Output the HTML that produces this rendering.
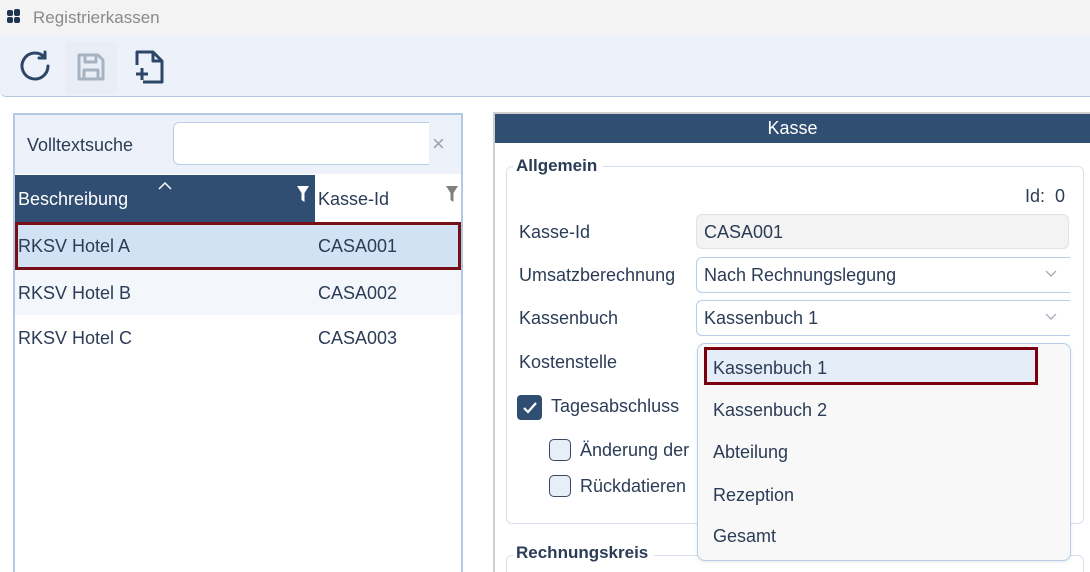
<!DOCTYPE html><html><head><meta charset="utf-8"><style>
*{box-sizing:border-box;margin:0;padding:0}
html,body{width:1090px;height:572px;overflow:hidden}
body{background:#fff;font-family:"Liberation Sans",sans-serif;color:#2b3c56;position:relative}
.a{position:absolute}
.t{font-size:18px;white-space:nowrap}
</style></head><body>
<div class="a" style="left:0;top:0;width:1090px;height:36px;background:#f3f3f3"></div>
<div class="a" style="left:7px;top:10px;width:6px;height:6px;background:#1e3350;border-radius:2px"></div>
<div class="a" style="left:14px;top:9px;width:6px;height:7px;background:#1e3350;border-radius:2px"></div>
<div class="a" style="left:7px;top:17px;width:6px;height:6px;background:#1e3350;border-radius:2px"></div>
<div class="a" style="left:14px;top:17px;width:6px;height:6px;background:#1e3350;border-radius:2px"></div>
<div class="a t" style="left:33px;top:8px;font-size:17px;color:#8a8a8a">Registrierkassen</div>
<div class="a" style="left:0;top:36px;width:1090px;height:61px;background:#edf2fa;border-bottom:1px solid #b6c8e0;border-radius:0 0 0 6px"></div>
<div class="a" style="left:65px;top:41px;width:52px;height:54px;background:#e9eef6;border-radius:4px"></div>
<svg class="a" style="left:18px;top:49px" width="34" height="34" viewBox="0 0 34 34" fill="none" stroke="#2d4566" stroke-width="3" stroke-linecap="round"><path d="M30 17a13 13 0 1 1-4-9.4"/><path d="M27 3v6h-6"/></svg>
<svg class="a" style="left:75px;top:51px" width="32" height="32" viewBox="0 0 32 32" fill="none" stroke="#a7b2c2" stroke-width="3" stroke-linejoin="round"><path d="M4 4h19l5 5v19H4z"/><path d="M10 4v7h11V4"/><path d="M9 28v-9h14v9"/></svg>
<svg class="a" style="left:133px;top:49px" width="32" height="36" viewBox="0 0 32 36" fill="none" stroke="#2d4566" stroke-width="3" stroke-linejoin="round"><path d="M4 16V3h16l9 9v21H10"/><path d="M20 3v9h9"/><path d="M9 19v12M3 25h12"/></svg>

<div class="a" style="left:13px;top:113px;width:450px;height:459px;border:2px solid #b2c9e6;border-bottom:none"></div>
<div class="a" style="left:15px;top:115px;width:446px;height:59px;background:#edf2fa"></div>
<div class="a t" style="left:27px;top:135px">Volltextsuche</div>
<div class="a" style="left:173px;top:122px;width:256px;height:43px;background:#fff;border:1px solid #b8cde8;border-right:none;border-radius:6px 0 0 6px"></div>
<div class="a" style="left:432px;top:131px;font-size:22px;color:#9aa3ae">×</div>
<div class="a" style="left:15px;top:175px;width:300px;height:47px;background:#304e72"></div>
<div class="a t" style="left:18px;top:189px;color:#fff">Beschreibung</div>
<svg class="a" style="left:158px;top:181px" width="14" height="9"><path d="M1 8l6-6 6 6" fill="none" stroke="#fff" stroke-width="1.5"/></svg>
<svg class="a" style="left:297px;top:186px" width="12" height="16" viewBox="0 0 12 16"><path d="M0 0h12L7.5 7v9L4.5 14V7z" fill="#fff"/></svg>
<div class="a t" style="left:318px;top:189px">Kasse-Id</div>
<svg class="a" style="left:446px;top:186px" width="12" height="16" viewBox="0 0 12 16"><path d="M0 0h12L7.5 7v9L4.5 14V7z" fill="#7f7f7f"/></svg>
<div class="a" style="left:15px;top:222px;width:446px;height:48px;background:#d2e1f3;border:3px solid #780f18"></div>
<div class="a t" style="left:18px;top:236px">RKSV Hotel A</div><div class="a t" style="left:318px;top:236px">CASA001</div>
<div class="a" style="left:15px;top:270px;width:446px;height:45px;background:#f3f6fa"></div>
<div class="a t" style="left:18px;top:283px">RKSV Hotel B</div><div class="a t" style="left:318px;top:283px">CASA002</div>
<div class="a t" style="left:18px;top:328px">RKSV Hotel C</div><div class="a t" style="left:318px;top:328px">CASA003</div>

<div class="a" style="left:493px;top:112px;width:597px;height:460px;border-left:2px solid #cfcfcf;border-top:2px solid #cfcfcf"></div>
<div class="a" style="left:495px;top:114px;width:595px;height:29px;background:#304e72;color:#fff;font-size:18px;text-align:center;line-height:29px">Kasse</div>
<div class="a" style="left:506px;top:166px;width:578px;height:358px;border:1px solid #d6e0ec;border-radius:6px"></div>
<div class="a t" style="left:513px;top:156px;background:#fff;padding:0 6px 0 3px;font-weight:bold;font-size:17px">Allgemein</div>
<div class="a t" style="left:1025px;top:186px">Id:&nbsp; 0</div>
<div class="a t" style="left:519px;top:222px">Kasse-Id</div>
<div class="a" style="left:696px;top:214px;width:373px;height:35px;background:#f3f3f3;border:1px solid #e3e3e3;border-radius:6px"></div>
<div class="a t" style="left:704px;top:222px">CASA001</div>
<div class="a t" style="left:519px;top:265px">Umsatzberechnung</div>
<div class="a" style="left:696px;top:257px;width:374px;height:36px;background:#fff;border:1px solid #b8cde8;border-right:none;border-radius:6px 0 0 6px"></div>
<div class="a t" style="left:704px;top:265px">Nach Rechnungslegung</div>
<svg class="a" style="left:1045px;top:270px" width="12" height="8"><path d="M1 1l5 5 5-5" fill="none" stroke="#9aa3ae" stroke-width="1.2"/></svg>
<div class="a t" style="left:519px;top:308px">Kassenbuch</div>
<div class="a" style="left:696px;top:300px;width:374px;height:36px;background:#fff;border:1px solid #b8cde8;border-right:none;border-radius:6px 0 0 6px"></div>
<div class="a t" style="left:704px;top:308px">Kassenbuch 1</div>
<svg class="a" style="left:1045px;top:313px" width="12" height="8"><path d="M1 1l5 5 5-5" fill="none" stroke="#9aa3ae" stroke-width="1.2"/></svg>
<div class="a t" style="left:519px;top:352px">Kostenstelle</div>
<div class="a" style="left:517px;top:395px;width:25px;height:25px;background:#304e72;border-radius:4px"></div>
<svg class="a" style="left:520px;top:398px" width="19" height="19"><path d="M4 10l4 4 8-9" fill="none" stroke="#fff" stroke-width="2.2"/></svg>
<div class="a t" style="left:551px;top:396px">Tagesabschluss</div>
<div class="a" style="left:549px;top:439px;width:22px;height:22px;background:#e8eef7;border:1.5px solid #3a4a60;border-radius:5px"></div>
<div class="a t" style="left:580px;top:440px">Änderung der</div>
<div class="a" style="left:549px;top:475px;width:22px;height:22px;background:#e8eef7;border:1.5px solid #3a4a60;border-radius:5px"></div>
<div class="a t" style="left:580px;top:476px">Rückdatieren</div>
<div class="a" style="left:506px;top:555px;width:578px;height:17px;border:1px solid #d6e0ec;border-bottom:none;border-radius:6px 6px 0 0"></div>
<div class="a t" style="left:513px;top:543px;background:#fff;padding:0 6px 0 3px;font-weight:bold;font-size:17px">Rechnungskreis</div>

<div class="a" style="left:697px;top:343px;width:374px;height:218px;background:#f8f8f8;border:1px solid #b8cde8;border-radius:8px;box-shadow:0 1px 3px rgba(0,0,0,.1)"></div>
<div class="a" style="left:704px;top:347px;width:334px;height:38px;background:#e4edf8;border:3px solid #7a0010"></div>
<div class="a t" style="left:713px;top:358px">Kassenbuch 1</div>
<div class="a t" style="left:713px;top:400px">Kassenbuch 2</div>
<div class="a t" style="left:713px;top:442px">Abteilung</div>
<div class="a t" style="left:713px;top:485px">Rezeption</div>
<div class="a t" style="left:713px;top:526px">Gesamt</div>
</body></html>
